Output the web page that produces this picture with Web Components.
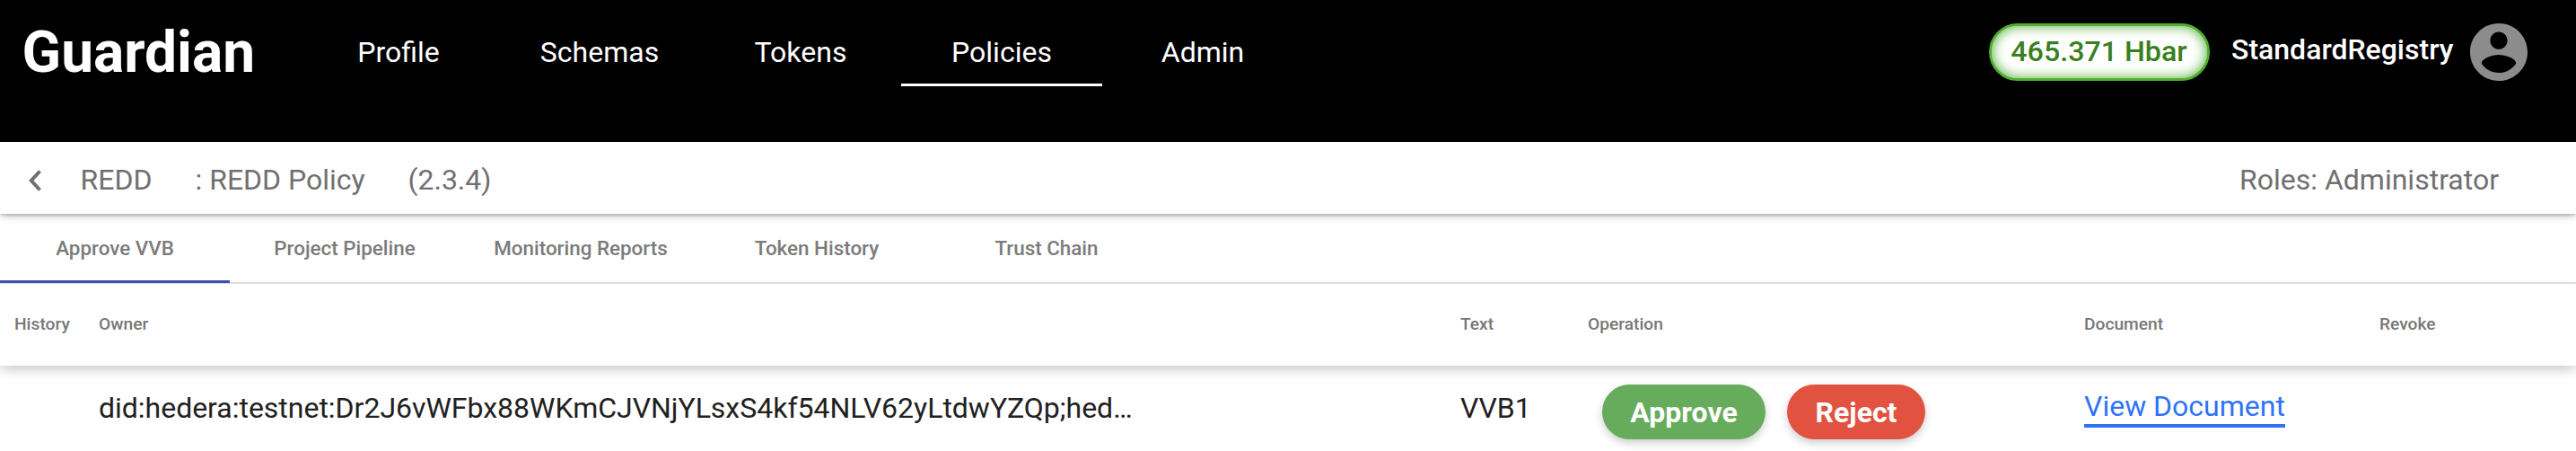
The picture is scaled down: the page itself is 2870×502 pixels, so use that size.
<!DOCTYPE html>
<html lang="en">
<head>
<meta charset="utf-8">
<title>Guardian</title>
<style>
  body { margin: 0; background: #fff; font-family: Roboto, "Liberation Sans", sans-serif; color: #212121; }
</style>
</head>
<body>
<guardian-app></guardian-app>
<script>
const define = (name, html) => customElements.define(name, class extends HTMLElement {
  constructor() {
    super();
    const t = document.createElement('template');
    t.innerHTML = html;
    this.attachShadow({ mode: 'open' }).append(t.content.cloneNode(true));
  }
});

define('nav-link', `
<style>
  :host { display: block; box-sizing: border-box; width: 224px; height: 96px; padding-top: 39px; text-align: center;
    font-size: 32px; line-height: 38px; color: #fff; border-bottom: 3px solid transparent; }
  :host([active]) { border-bottom-color: #fff; }
</style><slot></slot>`);

define('hbar-balance', `
<style>
  :host { display: block; box-sizing: border-box; width: 246px; height: 64px; border: 3px solid #4fae2f; border-radius: 32px;
    background: #fff; box-shadow: inset 0 0 14px #4fae2f; color: #3a7f1e; font-size: 32.2px; font-weight: 500;
    line-height: 57px; text-align: center; white-space: nowrap; padding-right: 1px; }
</style><slot></slot>`);

define('user-avatar', `
<style>:host { display: block; width: 64px; height: 64px; } svg { display: block; }</style>
<svg width="64" height="64" viewBox="2 2 20 20" fill="#8c8c8c"><path d="M12 2C6.48 2 2 6.48 2 12s4.48 10 10 10 10-4.48 10-10S17.52 2 12 2zm0 3c1.66 0 3 1.34 3 3s-1.34 3-3 3-3-1.34-3-3 1.34-3 3-3zm0 14.2c-2.5 0-4.71-1.28-6-3.22.03-1.99 4-3.08 6-3.08 1.99 0 5.97 1.09 6 3.08-1.29 1.94-3.5 3.22-6 3.22z"/></svg>`);

define('app-header', `
<style>
  :host { display: flex; align-items: flex-start; height: 158px; background: #000; color: #fff; }
  .brand { box-sizing: border-box; width: 332px; padding: 21px 0 0 24.5px; font-size: 64px; line-height: 75px; font-weight: 700; }
  nav { display: flex; flex: 1; }
  .account { display: flex; padding: 26px 54px 0 0; }
  .name { margin: 10px 19px 0 24px; font-size: 32px; line-height: 38px; font-weight: 500; width: 247px; white-space: nowrap; }
</style>
<div class="brand">Guardian</div>
<nav><nav-link>Profile</nav-link><nav-link>Schemas</nav-link><nav-link>Tokens</nav-link><nav-link active>Policies</nav-link><nav-link>Admin</nav-link></nav>
<div class="account"><hbar-balance>465.371 Hbar</hbar-balance><div class="name">StandardRegistry</div><user-avatar></user-avatar></div>`);

define('policy-bar', `
<style>
  :host { display: flex; align-items: center; box-sizing: border-box; height: 80px; padding: 4px 86px 0 32px; position: relative; z-index: 1;
    background: #fff; color: #707070; font-size: 32px; line-height: 38px; white-space: nowrap;
    box-shadow: 0 4px 8px -2px rgba(0,0,0,.28), 0 2px 2px 0 rgba(0,0,0,.12); }
  svg { display: block; width: 14px; margin: 2px 43.5px 0 0; }
  .org { width: 128px; } .policy { width: 237px; } .roles { margin-left: auto; }
</style>
<svg width="14" height="24" viewBox="0 0 14 24" fill="none" stroke="#707070" stroke-width="4"><path d="M12.5 1.5L2.8 12l9.7 10.5"/></svg>
<span class="org">REDD</span><span class="policy">: REDD Policy</span><span>(2.3.4)</span>
<span class="roles">Roles: Administrator</span>`);

define('tab-item', `
<style>
  :host { display: block; box-sizing: border-box; width: 256px; height: 77px; padding-top: 25px; text-align: center;
    font-size: 22.4px; line-height: 26px; font-weight: 500; color: #7b7b7b; }
  :host([wide]) { width: 270px; }
  :host([active]) { border-bottom: 3px solid #3f51b5; }
</style><slot></slot>`);

define('tab-strip', `
<style>
  :host { display: flex; box-sizing: border-box; height: 78px; border-bottom: 2px solid #e0e0e0; }
</style><slot></slot>`);

define('pill-button', `
<style>
  :host { display: block; box-sizing: border-box; height: 61px; border-radius: 31px; font-size: 32px; line-height: 63px; font-weight: 700;
    color: #fff; text-align: center; box-shadow: 0 4px 10px rgba(0,0,0,.2); }
  :host([kind="approve"]) { width: 182px; background: #67ac5c; }
  :host([kind="reject"]) { width: 154px; background: #e15241; }
</style><slot></slot>`);

define('document-table', `
<style>
  :host { display: block; }
  .row { display: grid; grid-template-columns: 94px 1517px 142px 553px 329px 1fr; padding-left: 16px; white-space: nowrap; }
  .head { height: 91px; position: relative; font-size: 19.2px; line-height: 24px; font-weight: 500; color: #777; box-sizing: border-box; padding-top: 33px;
    box-shadow: 0 6px 12px -1px rgba(0,0,0,.2); }
  .body { height: 95px; font-size: 32px; line-height: 38px; }
  .body > * { margin-top: 28px; }
  .body > .owner { width: 1152px; letter-spacing: -.015px; }
  .body > .actions { display: flex; gap: 24px; margin: 21px 0 0 16px; }
  .body > .link { color: #2f73f6; border-bottom: 4px solid #2f73f6; justify-self: start; height: 39px; margin-top: 26px; }
</style>
<div class="row head"><span>History</span><span>Owner</span><span>Text</span><span>Operation</span><span>Document</span><span>Revoke</span></div>
<div class="row body"><span></span><span class="owner">did:hedera:testnet:Dr2J6vWFbx88WKmCJVNjYLsxS4kf54NLV62yLtdwYZQp;hed…</span><span>VVB1</span>
<div class="actions"><pill-button kind="approve">Approve</pill-button><pill-button kind="reject">Reject</pill-button></div>
<span class="link">View Document</span><span></span></div>`);

define('guardian-app', `
<style>:host { display: block; width: 2870px; height: 502px; overflow: hidden; background: #fff; }</style>
<app-header></app-header>
<policy-bar></policy-bar>
<tab-strip><tab-item active>Approve VVB</tab-item><tab-item>Project Pipeline</tab-item><tab-item wide>Monitoring Reports</tab-item><tab-item>Token History</tab-item><tab-item>Trust Chain</tab-item></tab-strip>
<document-table></document-table>`);
</script>
</body>
</html>
